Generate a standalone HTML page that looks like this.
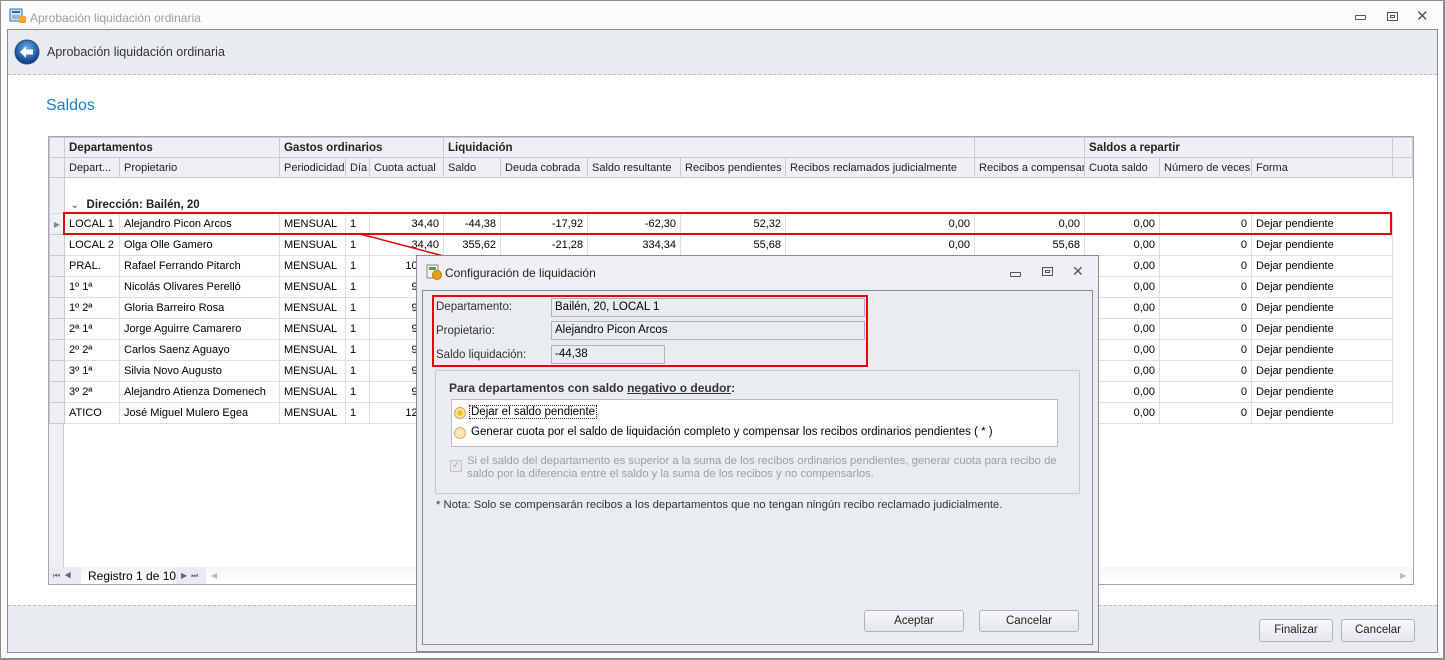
<!DOCTYPE html>
<html><head><meta charset="utf-8"><style>
*{box-sizing:border-box;margin:0;padding:0}
body{width:1445px;height:660px;position:relative;overflow:hidden;background:#fbfbfb;font-family:"Liberation Sans",sans-serif;font-size:11.5px;color:#000}
.a{position:absolute}
table{border-collapse:collapse;table-layout:fixed;position:absolute;left:49px;top:137px;width:1363px;font-size:11px}
td{height:21px;border:1px solid #dadde2;padding:0 4px;white-space:nowrap;overflow:hidden}
tr.h td{background:#eef0f3;border-color:#c8cbd1;height:20px;color:#222}
tr.h1 td{font-weight:bold;color:#222;font-size:11.5px}
td.r{text-align:right}
td.i{background:#eef0f3;border-color:#c8cbd1;padding:0}
.btn{position:absolute;border:1px solid #aeb3ba;border-radius:3px;background:linear-gradient(#f7f8fa,#e4e7eb);text-align:center;line-height:20px;color:#222}
</style></head><body>
<div class="a" style="left:0;top:0;width:1445px;height:660px;border:1px solid #8a8e94;border-right-width:2px;border-bottom-width:2px"></div>
<svg class="a" style="left:9px;top:8px" width="18" height="16"><rect x="1" y="1" width="12" height="12" fill="#cfe3f5" stroke="#2c6fb5"/><rect x="3" y="3" width="8" height="2" fill="#2c6fb5"/><rect x="3" y="7" width="8" height="4" fill="#8fb8e0"/><rect x="10" y="8" width="7" height="7" rx="1" fill="#f2a530"/></svg>
<div class="a" style="left:30px;top:11px;color:#9a9ea4;font-size:12px">Aprobación liquidación ordinaria</div>
<div class="a" style="left:1355px;top:15px;width:11px;height:5px;border:1px solid #555;border-radius:1px"></div>
<div class="a" style="left:1387px;top:12px;width:11px;height:9px;border:1px solid #555"><div style="margin:2px auto;width:5px;height:3px;border:1px solid #555"></div></div>
<div class="a" style="left:1416px;top:7px;font-size:15px;color:#555">✕</div>
<div class="a" style="left:7px;top:29px;width:1431px;height:624px;border:1px solid #8a8e94;background:#fff"></div>
<div class="a" style="left:8px;top:30px;width:1429px;height:45px;background:#e8ebf0;border-bottom:1px dashed #b8bcc4"></div>
<svg class="a" style="left:14px;top:39px" width="26" height="26"><defs><radialGradient id="g" cx="50%" cy="35%" r="60%"><stop offset="0" stop-color="#6fb0ea"/><stop offset="1" stop-color="#0b3f8c"/></radialGradient></defs><circle cx="13" cy="13" r="12" fill="url(#g)" stroke="#2a4f80"/><path d="M6 13 L12 7 L12 10.5 L19 10.5 L19 15.5 L12 15.5 L12 19 Z" fill="#fff"/></svg>
<div class="a" style="left:47px;top:45px;font-size:12.5px;color:#333">Aprobación liquidación ordinaria</div>
<div class="a" style="left:46px;top:97px;font-size:16px;color:#1e7fc8">Saldos</div>
<div class="a" style="left:8px;top:605px;width:1429px;height:47px;background:#e8ebf0;border-top:1px dashed #b8bcc4"></div>
<div class="btn" style="left:1259px;top:619px;width:74px;height:23px">Finalizar</div>
<div class="btn" style="left:1341px;top:619px;width:74px;height:23px">Cancelar</div>
<div class="a" style="left:48px;top:136px;width:1366px;height:449px;border:1px solid #a3a8b0;background:#fff"></div>
<table>
<colgroup><col style="width:15px"><col style="width:55px"><col style="width:160px"><col style="width:66px"><col style="width:24px"><col style="width:74px"><col style="width:57px"><col style="width:87px"><col style="width:93px"><col style="width:105px"><col style="width:189px"><col style="width:110px"><col style="width:75px"><col style="width:92px"><col style="width:141px"><col style="width:20px"></colgroup>
<tr class="h h1"><td></td><td colspan="2">Departamentos</td><td colspan="3">Gastos ordinarios</td><td colspan="5">Liquidación</td><td></td><td colspan="3">Saldos a repartir</td><td></td></tr>
<tr class="h"><td></td><td>Depart...</td><td>Propietario</td><td>Periodicidad</td><td>Día</td><td>Cuota actual</td><td>Saldo</td><td>Deuda cobrada</td><td>Saldo resultante</td><td>Recibos pendientes</td><td>Recibos reclamados judicialmente</td><td>Recibos a compensar</td><td>Cuota saldo</td><td>Número de veces</td><td>Forma</td><td></td></tr>
<tr><td class="i" style="height:36px;border-bottom-color:#dadde2"></td><td colspan="15" style="height:36px;border:none;vertical-align:bottom;padding:0 0 2px 6px;font-weight:bold;color:#222;font-size:11.5px"><span style="color:#777;font-size:9px;margin-right:8px">⌄</span>Dirección: Bailén, 20</td></tr>
<tr><td class="i" style="color:#888;font-size:8px;text-align:center">▶</td><td>LOCAL 1</td><td>Alejandro Picon Arcos</td><td>MENSUAL</td><td>1</td><td class="r">34,40</td><td class="r">-44,38</td><td class="r">-17,92</td><td class="r">-62,30</td><td class="r">52,32</td><td class="r">0,00</td><td class="r">0,00</td><td class="r">0,00</td><td class="r">0</td><td>Dejar pendiente</td><td style="border:none"></td></tr>
<tr><td class="i"></td><td>LOCAL 2</td><td>Olga Olle Gamero</td><td>MENSUAL</td><td>1</td><td class="r">34,40</td><td class="r">355,62</td><td class="r">-21,28</td><td class="r">334,34</td><td class="r">55,68</td><td class="r">0,00</td><td class="r">55,68</td><td class="r">0,00</td><td class="r">0</td><td>Dejar pendiente</td><td style="border:none"></td></tr>
<tr><td class="i"></td><td>PRAL.</td><td>Rafael Ferrando Pitarch</td><td>MENSUAL</td><td>1</td><td class="r">102,00</td><td></td><td></td><td></td><td></td><td></td><td></td><td class="r">0,00</td><td class="r">0</td><td>Dejar pendiente</td><td style="border:none"></td></tr>
<tr><td class="i"></td><td>1º 1ª</td><td>Nicolás Olivares Perelló</td><td>MENSUAL</td><td>1</td><td class="r">95,00</td><td></td><td></td><td></td><td></td><td></td><td></td><td class="r">0,00</td><td class="r">0</td><td>Dejar pendiente</td><td style="border:none"></td></tr>
<tr><td class="i"></td><td>1º 2ª</td><td>Gloria Barreiro Rosa</td><td>MENSUAL</td><td>1</td><td class="r">95,00</td><td></td><td></td><td></td><td></td><td></td><td></td><td class="r">0,00</td><td class="r">0</td><td>Dejar pendiente</td><td style="border:none"></td></tr>
<tr><td class="i"></td><td>2ª 1ª</td><td>Jorge Aguirre Camarero</td><td>MENSUAL</td><td>1</td><td class="r">95,00</td><td></td><td></td><td></td><td></td><td></td><td></td><td class="r">0,00</td><td class="r">0</td><td>Dejar pendiente</td><td style="border:none"></td></tr>
<tr><td class="i"></td><td>2º 2ª</td><td>Carlos Saenz Aguayo</td><td>MENSUAL</td><td>1</td><td class="r">95,00</td><td></td><td></td><td></td><td></td><td></td><td></td><td class="r">0,00</td><td class="r">0</td><td>Dejar pendiente</td><td style="border:none"></td></tr>
<tr><td class="i"></td><td>3º 1ª</td><td>Silvia Novo Augusto</td><td>MENSUAL</td><td>1</td><td class="r">95,00</td><td></td><td></td><td></td><td></td><td></td><td></td><td class="r">0,00</td><td class="r">0</td><td>Dejar pendiente</td><td style="border:none"></td></tr>
<tr><td class="i"></td><td>3º 2ª</td><td>Alejandro Atienza Domenech</td><td>MENSUAL</td><td>1</td><td class="r">95,00</td><td></td><td></td><td></td><td></td><td></td><td></td><td class="r">0,00</td><td class="r">0</td><td>Dejar pendiente</td><td style="border:none"></td></tr>
<tr><td class="i"></td><td>ATICO</td><td>José Miguel Mulero Egea</td><td>MENSUAL</td><td>1</td><td class="r">120,00</td><td></td><td></td><td></td><td></td><td></td><td></td><td class="r">0,00</td><td class="r">0</td><td>Dejar pendiente</td><td style="border:none"></td></tr>
</table>
<div class="a" style="left:49px;top:424px;width:15px;height:143px;background:#eef0f3;border-right:1px solid #c8cbd1"></div>
<div class="a" style="left:49px;top:567px;width:1363px;height:17px;background:linear-gradient(#f4f5f7,#fff)"></div>
<div class="a" style="left:49px;top:567px;width:32px;height:17px;background:#e8ebf0;font-size:8px;color:#666;line-height:17px;padding-left:4px;letter-spacing:4px">⏮◀</div>
<div class="a" style="left:88px;top:569px;font-size:12px">Registro 1 de 10</div>
<div class="a" style="left:176px;top:567px;width:30px;height:17px;background:#e8ebf0;font-size:8px;color:#666;line-height:17px;padding-left:5px;letter-spacing:4px">▶⏭</div>
<div class="a" style="left:211px;top:571px;font-size:8px;color:#bbb">◀</div>
<div class="a" style="left:1400px;top:571px;font-size:8px;color:#bbb">▶</div>
<div class="a" style="left:63px;top:212px;width:1329px;height:23px;border:2px solid #e8000b"></div>
<svg class="a" style="left:0;top:0" width="1445" height="660"><line x1="360" y1="234" x2="478" y2="265" stroke="#e8000b" stroke-width="1.5"/></svg>
<div class="a" style="left:416px;top:255px;width:683px;height:397px;background:#e9ecf0;border:1px solid #8a8e94"></div>
<div class="a" style="left:417px;top:256px;width:681px;height:31px;background:#eef0f3"></div>
<svg class="a" style="left:426px;top:264px" width="16" height="16"><rect x="1" y="1" width="11" height="13" fill="#eef4e8" stroke="#888"/><rect x="3" y="3" width="7" height="3" fill="#5a9a4a"/><circle cx="11" cy="11" r="4.5" fill="#e7a21a" stroke="#b07a10"/></svg>
<div class="a" style="left:445px;top:266px;font-size:12px;color:#222">Configuración de liquidación</div>
<div class="a" style="left:1010px;top:272px;width:11px;height:5px;border:1px solid #555;border-radius:1px"></div>
<div class="a" style="left:1042px;top:267px;width:11px;height:9px;border:1px solid #555"><div style="margin:2px auto;width:5px;height:3px;border:1px solid #555"></div></div>
<div class="a" style="left:1072px;top:263px;font-size:14px;color:#555">✕</div>
<div class="a" style="left:422px;top:290px;width:671px;height:355px;border:1px solid #8a8e94"></div>
<div class="a" style="left:432px;top:295px;width:436px;height:72px;border:2px solid #e8000b"></div>
<div class="a" style="left:436px;top:301px;color:#333">Departamento:</div>
<div class="a" style="left:436px;top:325px;color:#333">Propietario:</div>
<div class="a" style="left:436px;top:349px;color:#333">Saldo liquidación:</div>
<div class="a" style="left:551px;top:298px;width:314px;height:19px;border:1px solid #b0b4ba;padding:2px 3px">Bailén, 20, LOCAL 1</div>
<div class="a" style="left:551px;top:321px;width:314px;height:19px;border:1px solid #b0b4ba;padding:2px 3px">Alejandro Picon Arcos</div>
<div class="a" style="left:551px;top:345px;width:114px;height:19px;border:1px solid #b0b4ba;padding:2px 3px">-44,38</div>
<div class="a" style="left:435px;top:370px;width:645px;height:124px;border:1px solid #c5c9cf;border-radius:2px"></div>
<div class="a" style="left:449px;top:381px;font-weight:bold;color:#333;font-size:12px">Para departamentos con saldo <u>negativo o deudor</u>:</div>
<div class="a" style="left:451px;top:399px;width:607px;height:48px;background:#fff;border:1px solid #b8bcc2"></div>
<div class="a" style="left:454px;top:407px;width:12px;height:12px;border-radius:50%;background:radial-gradient(#f5c400 35%,#fbe6b0 45%);border:1px solid #d9a060"></div>
<div class="a" style="left:470px;top:406px;outline:1px dotted #333;padding:0 1px">Dejar el saldo pendiente</div>
<div class="a" style="left:454px;top:427px;width:12px;height:12px;border-radius:50%;background:#fde3c0;border:1px solid #e8a860"></div>
<div class="a" style="left:471px;top:426px">Generar cuota por el saldo de liquidación completo y compensar los recibos ordinarios pendientes ( * )</div>
<div class="a" style="left:450px;top:460px;width:12px;height:12px;border:1px solid #c0c3c8;background:#e6e8eb;color:#aaa;font-size:10px;line-height:10px;text-align:center">✓</div>
<div class="a" style="left:467px;top:455px;width:590px;color:#9ca0a6;line-height:13px;font-size:11.3px">Si el saldo del departamento es superior a la suma de los recibos ordinarios pendientes, generar cuota para recibo de saldo por la diferencia entre el saldo y la suma de los recibos y no compensarlos.</div>
<div class="a" style="left:436px;top:499px;color:#333;font-size:11.3px">* Nota: Solo se compensarán recibos a los departamentos que no tengan ningún recibo reclamado judicialmente.</div>
<div class="btn" style="left:864px;top:610px;width:100px;height:22px">Aceptar</div>
<div class="btn" style="left:979px;top:610px;width:100px;height:22px">Cancelar</div>
</body></html>
